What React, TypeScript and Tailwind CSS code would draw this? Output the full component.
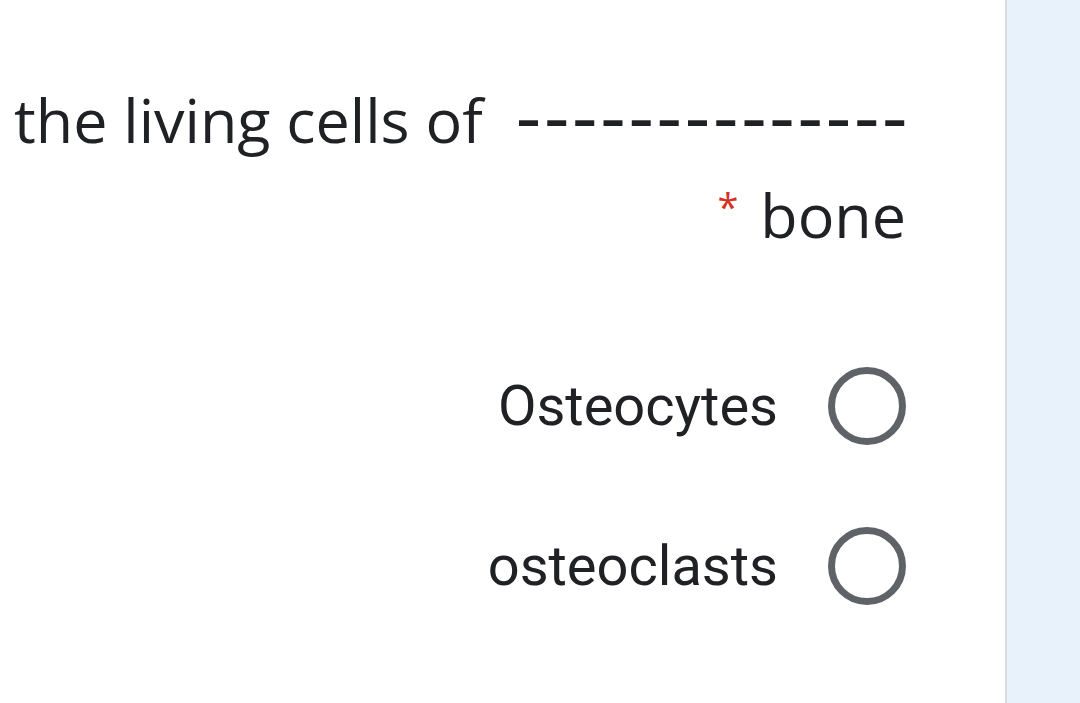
const radio = (label: string) => (
  <div className="flex items-center justify-end gap-[50px] h-[160px]">
    <span className="text-[56px] leading-none text-[#202124]" style={{ fontFamily: "Roboto, sans-serif" }}>
      {label}
    </span>
    <span className="w-[78px] h-[78px] rounded-full border-[7px] border-[#5f6368]" />
  </div>
);

export default function App() {
  return (
    <div className="flex h-[703px] w-[1080px] bg-white" style={{ fontFamily: "'Open Sans', sans-serif" }}>
      <div className="w-[1005px] pl-[14px] pr-[99px] pt-[72px] flex flex-col">
        <div className="flex items-baseline justify-between whitespace-nowrap text-[#202124] text-[61px] leading-[95px]">
          <span>the living cells of</span>
          <span
            className="text-[72px] tracking-[2.2px] mr-[-4px] leading-[40px]"
            style={{ fontFamily: "'DejaVu Sans', sans-serif" }}
          >
            --------------
          </span>
        </div>
        <div className="flex items-baseline justify-end gap-[22px] text-[61px] leading-[95px] text-[#202124]">
          <span className="self-start mt-[24px] text-[#d93025] text-[38px] leading-[30px]">*</span>
          <span>bone</span>
        </div>
        <div className="mt-[64px] flex flex-col">
          {radio("Osteocytes")}
          {radio("osteoclasts")}
        </div>
      </div>
      <div className="w-[2px] bg-[#dadce0]" />
      <div className="flex-1 bg-[#e8f2fb]" />
    </div>
  );
}
